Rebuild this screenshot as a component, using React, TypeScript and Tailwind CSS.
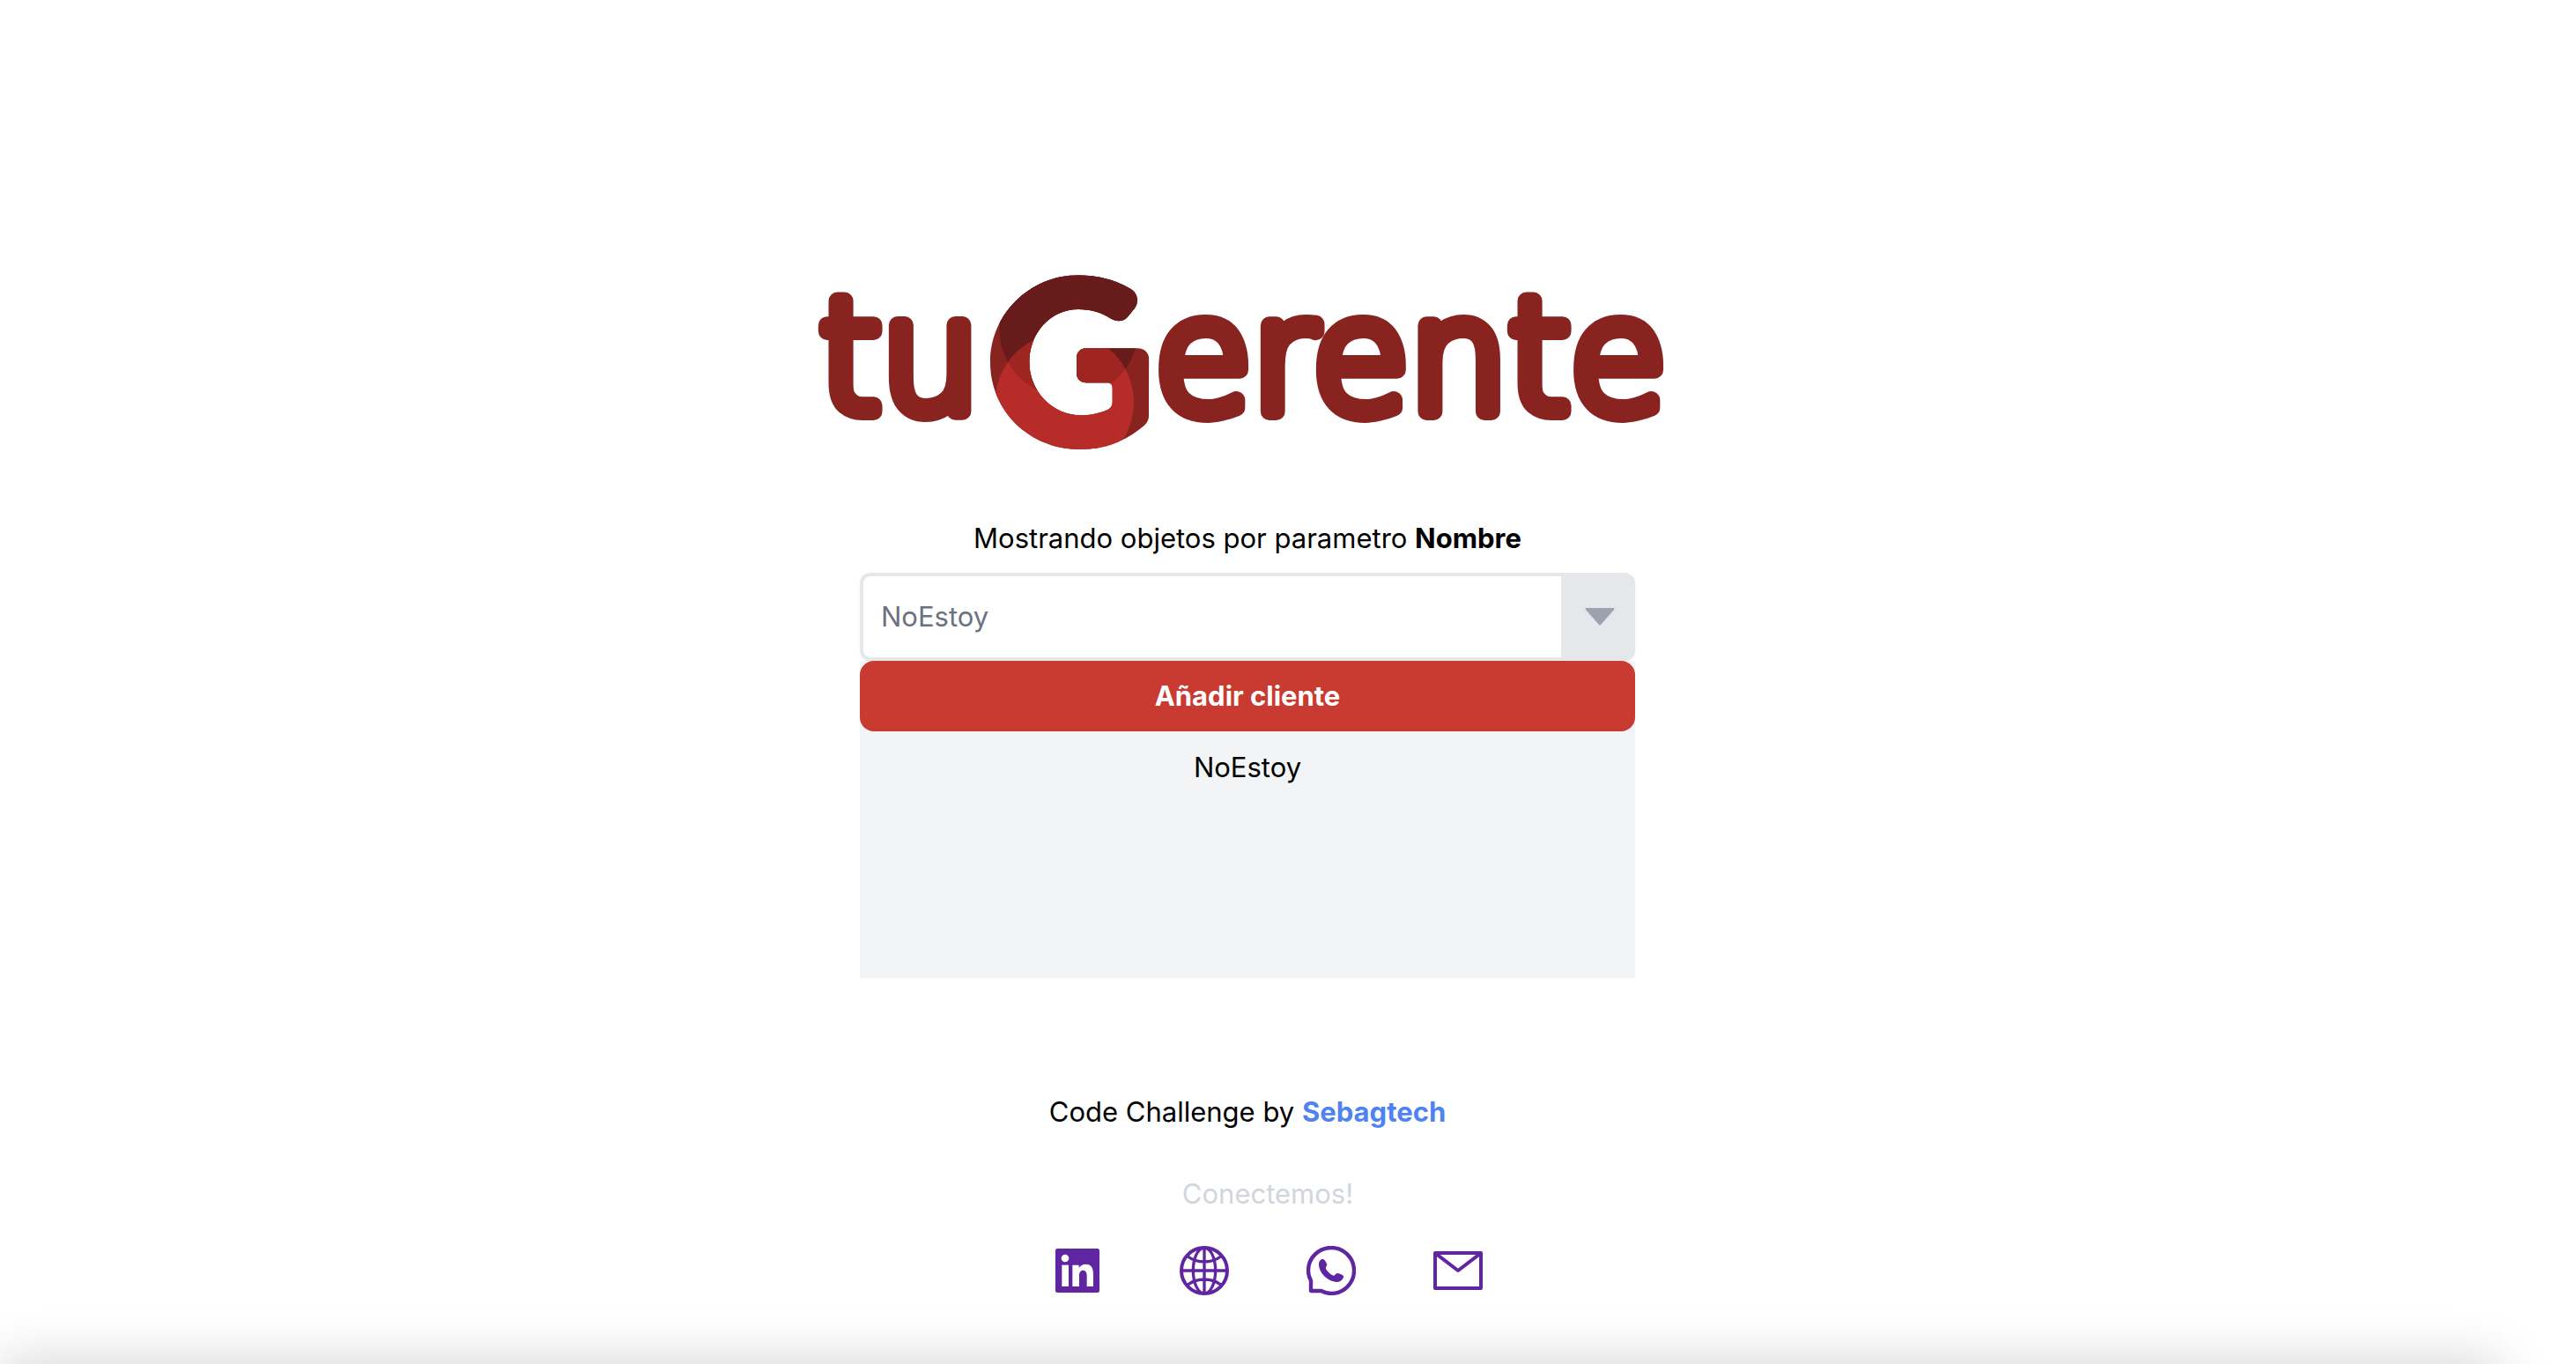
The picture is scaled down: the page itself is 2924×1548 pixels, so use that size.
import { useId, useState } from 'react';

function Logo() {
  const clip = useId();
  const both = useId();
  return (
    <svg
      viewBox="928 312 978 198"
      role="img"
      aria-label="tuGerente"
      className="w-full max-w-[978px] overflow-visible"
    >
      <defs>
        <clipPath id={clip}>
          <path d="M523 83C538 92 546 106 546 122C546 134 542 143 536 151L512 180C497 196 475 195 458 186C425 164 388 153 345 153C250 153 178 235 178 333C178 430 255 514 356 514C390 514 425 504 446 494C456 489 461 481 461 470V420C461 409 454 403 444 403H372C352 403 339 389 339 370V320C339 300 352 286 372 286H548C570 286 585 301 586 322L585 515C585 530 579 540 570 548C508 600 440 630 350 630C180 630 45 500 45 333C45 170 180 37 345 37C410 37 475 55 523 83Z" />
        </clipPath>
        <clipPath id={both}>
          <circle cx="298" cy="470" r="236" />
        </clipPath>
      </defs>
      <g
        fill="#882320"
        stroke="#882320"
        strokeWidth="20"
        strokeLinejoin="round"
        fontFamily="'DejaVu Sans', sans-serif"
        fontWeight="200"
        fontSize="178"
      >
        <text x="931" y="467">tu</text>
        <text x="1312" y="467">erente</text>
      </g>
      <g transform="translate(1110 300) scale(0.33333)">
        <g clipPath={`url(#${clip})`}>
          <rect width="660" height="660" fill="#882320" />
          <rect width="660" height="204" fill="#681b1b" />
          <circle cx="313" cy="218" r="237" fill="#681b1b" />
          <circle cx="298" cy="470" r="236" fill="#b72c29" />
          <g clipPath={`url(#${both})`}>
            <circle cx="313" cy="218" r="237" fill="#9f2522" />
          </g>
        </g>
      </g>
    </svg>
  );
}

function LinkedinIcon() {
  return (
    <svg viewBox="0 0 168 168" className="size-14" aria-hidden="true">
      <rect x="9" y="9" width="150" height="150" rx="7" fill="currentColor" />
      <g fill="#fff">
        <circle cx="42" cy="42" r="13" />
        <rect x="31" y="65" width="23" height="73" />
        <path d="M67 138V65H89V75C94 67 102 62 112 62C131 62 138 74 138 98V138H116V101C116 90 112 83 103 83C94 83 90 90 90 101V138Z" />
      </g>
    </svg>
  );
}

function GlobeIcon() {
  return (
    <svg viewBox="0 0 168 168" className="size-14" fill="none" stroke="currentColor" strokeWidth="10" aria-hidden="true">
      <circle cx="84" cy="84" r="78" strokeWidth="12" />
      <ellipse cx="84" cy="84" rx="38" ry="78" />
      <path d="M84 6V162M6 84H162M28 36C60 60 108 60 140 36M28 132C60 108 108 108 140 132" />
    </svg>
  );
}

function WhatsappIcon() {
  return (
    <svg viewBox="0 0 168 168" className="size-14" aria-hidden="true">
      <path
        d="M15 153V118C9 108 6 96 6 84A78 78 0 1 1 84 162C70 162 60 158 50 153Z"
        fill="none"
        stroke="currentColor"
        strokeWidth="13"
        strokeLinejoin="round"
      />
      <path
        d="M42 64C42 50 50 43 58 46C64 49 68 58 70 64C69 70 64 73 66 78C72 89 82 98 92 101C97 102 99 93 105 93C112 94 120 97 126 102C127 112 118 122 104 123C72 122 43 92 42 64Z"
        fill="currentColor"
      />
    </svg>
  );
}

function MailIcon() {
  return (
    <svg viewBox="0 0 168 168" className="size-14" fill="none" stroke="currentColor" strokeWidth="12" strokeLinejoin="round" aria-hidden="true">
      <rect x="6" y="24" width="156" height="120" />
      <path d="M8 26L84 84L160 26" />
    </svg>
  );
}

const links = [
  { label: 'LinkedIn', href: '#linkedin', Icon: LinkedinIcon },
  { label: 'Sitio web', href: '#web', Icon: GlobeIcon },
  { label: 'WhatsApp', href: '#whatsapp', Icon: WhatsappIcon },
  { label: 'Correo', href: '#correo', Icon: MailIcon },
];

export default function App() {
  const [cliente, setCliente] = useState('NoEstoy');
  return (
    <div className="relative min-h-screen overflow-hidden bg-white pr-[92px] font-['Inter',sans-serif] text-[31px] leading-[48px] text-black">
      <main className="flex flex-col items-center pt-[312px]">
        <Logo />
        <label htmlFor="cliente" className="mt-[77px]">
          Mostrando objetos por parametro <b className="font-bold">Nombre</b>
        </label>
        <div className="mt-[15px] w-full max-w-[880px] bg-gray-100">
          <div className="bg-white">
            <div className="grid h-[100px] items-center overflow-hidden rounded-xl border-4 border-[#e5e7eb] bg-[#e5e7eb] shadow-xs">
              <select
                id="cliente"
                value={cliente}
                onChange={(e) => setCliente(e.target.value)}
                className="col-start-1 row-start-1 mr-20 h-full appearance-none rounded-l-lg bg-white pl-5 text-[#6b7280] outline-none"
              >
                <option>NoEstoy</option>
              </select>
              <svg
                viewBox="0 0 34 20"
                className="pointer-events-none col-start-1 row-start-1 mr-[19px] h-5 w-[34px] justify-self-end fill-[#9ca3af]"
                aria-hidden="true"
              >
                <path d="M1 0H33Q34 1 33 2L18 19Q17 20 16 19L1 2Q0 1 1 0Z" />
              </svg>
            </div>
          </div>
          <button type="button" className="h-20 w-full rounded-2xl bg-[#c93a31] font-bold text-white">
            Añadir cliente
          </button>
          <p className="min-h-[280px] pt-[17px] text-center">{cliente}</p>
        </div>
      </main>
      <footer className="flex flex-col items-center pt-32">
        <p>
          Code Challenge by{' '}
          <a href="#sebagtech" className="font-bold text-[#4f83f1]">
            Sebagtech
          </a>
        </p>
        <p className="mt-[45px] pl-[46px] text-gray-300">Conectemos!</p>
        <nav aria-label="Redes" className="mt-[35px] flex gap-[88px] pl-[46px] text-[#6026a1]">
          {links.map(({ label, href, Icon }) => (
            <a key={label} href={href} aria-label={label}>
              <Icon />
            </a>
          ))}
        </nav>
      </footer>
      <div className="pointer-events-none absolute top-full right-[88px] left-0 h-40 shadow-[0_0_64px_rgba(0,0,0,0.19)]" />
    </div>
  );
}
